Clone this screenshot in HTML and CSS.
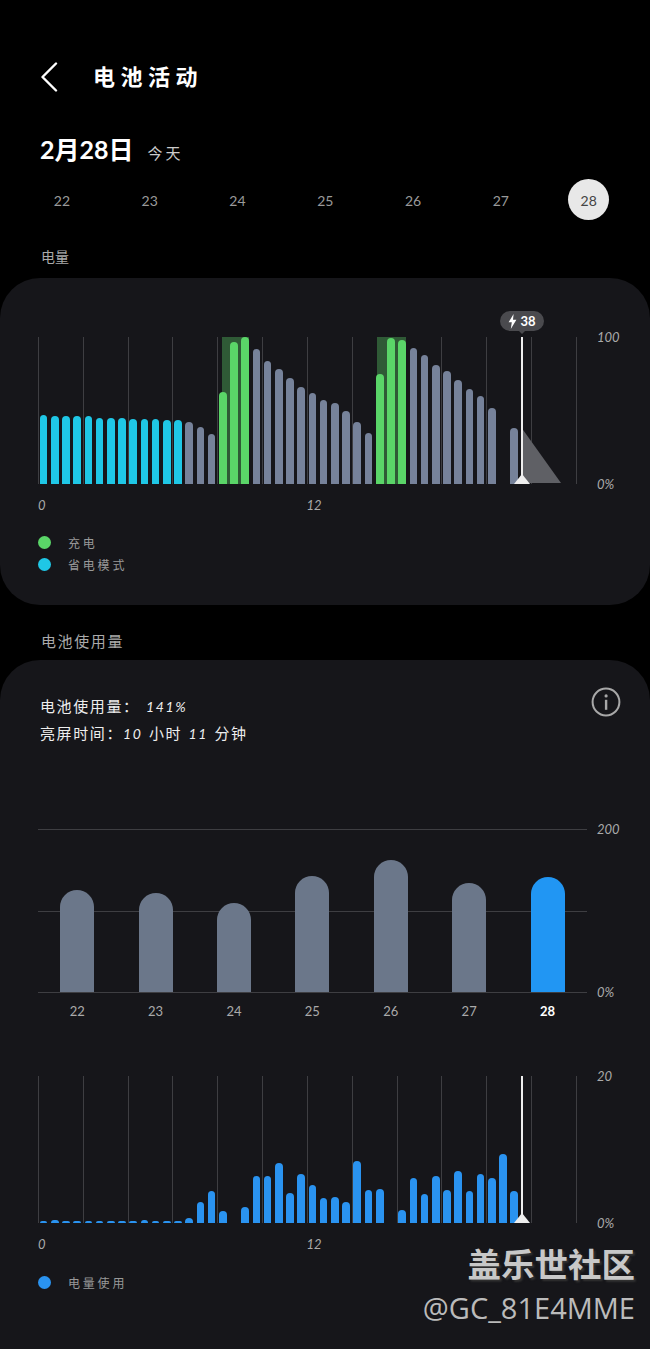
FILE: index.html
```html
<!DOCTYPE html>
<html>
<head>
    <title>电池活动</title>
    <link rel="stylesheet" href="styles.css">
</head>
<body>
    <div class="header">
        <svg class="back" width="18" height="30" viewBox="0 0 18 30"><path d="M16 1.5 L2.5 15 L16 28.5" fill="none" stroke="#fff" stroke-width="2.4" stroke-linecap="round" stroke-linejoin="round"/></svg>
        <h1>电池活动</h1>
    </div>

    <div class="date-row">
        <span class="date">2月28日</span>
        <span class="today">今天</span>
    </div>

    <div class="days">
        <span class="day">22</span>
        <span class="day">23</span>
        <span class="day">24</span>
        <span class="day">25</span>
        <span class="day">26</span>
        <span class="day">27</span>
        <span class="day active">28</span>
    </div>

    <h2 class="section-title first">电量</h2>

    <div class="card level-card">
        <div class="chart">
            <div class="plot">
                <div class="zone zone-a"></div>
                <div class="zone zone-b"></div>
                <div class="bars">
                    <i class="bar save" style="height:69px"></i><i class="bar save" style="height:68px"></i><i class="bar save" style="height:68px"></i><i class="bar save" style="height:68px"></i>
                    <i class="bar save" style="height:68px"></i><i class="bar save" style="height:66px"></i><i class="bar save" style="height:66px"></i><i class="bar save" style="height:66px"></i>
                    <i class="bar save" style="height:65px"></i><i class="bar save" style="height:65px"></i><i class="bar save" style="height:65px"></i><i class="bar save" style="height:64px"></i>
                    <i class="bar save" style="height:64px"></i><i class="bar" style="height:62px"></i><i class="bar" style="height:57px"></i><i class="bar" style="height:50px"></i>
                    <i class="bar charge" style="height:92px"></i><i class="bar charge" style="height:142px"></i><i class="bar charge" style="height:147px"></i><i class="bar" style="height:135px"></i>
                    <i class="bar" style="height:123px"></i><i class="bar" style="height:115px"></i><i class="bar" style="height:106px"></i><i class="bar" style="height:97px"></i>
                    <i class="bar" style="height:91px"></i><i class="bar" style="height:84px"></i><i class="bar" style="height:81px"></i><i class="bar" style="height:73px"></i>
                    <i class="bar" style="height:62px"></i><i class="bar" style="height:51px"></i><i class="bar charge" style="height:110px"></i><i class="bar charge" style="height:146px"></i>
                    <i class="bar charge" style="height:144px"></i><i class="bar" style="height:136px"></i><i class="bar" style="height:129px"></i><i class="bar" style="height:119px"></i>
                    <i class="bar" style="height:113px"></i><i class="bar" style="height:104px"></i><i class="bar" style="height:95px"></i><i class="bar" style="height:88px"></i>
                    <i class="bar" style="height:76px"></i><i></i><i class="bar" style="height:56px"></i>
                </div>
                <svg class="forecast" width="45" height="57" viewBox="0 0 45 57"><polygon points="4,0 44,56 4,56" fill="#5f6065"/></svg>
                <div class="now"></div>
                <svg class="now-tip" width="16" height="10" viewBox="0 0 16 10"><polygon points="8,0 16,10 0,10" fill="#eee"/></svg>
                <div class="badge">
                    <svg width="9" height="15" viewBox="0 0 9 15"><path d="M5.6 0 L0.6 8.2 L3.8 8.2 L2.8 15 L8.4 5.8 L5 5.8 Z" fill="#fff"/></svg>
                    <span>38</span>
                </div>
            </div>
            <div class="y-axis">
                <span>100</span>
                <span>0%</span>
            </div>
        </div>
        <div class="x-axis">
            <span>0</span>
            <span>12</span>
        </div>
        <div class="legend">
            <div class="legend-row"><span class="dot green"></span>充电</div>
            <div class="legend-row"><span class="dot teal"></span>省电模式</div>
        </div>
    </div>

    <h2 class="section-title">电池使用量</h2>

    <div class="card usage-card">
        <div class="summary">
            <div class="summary-text">
                <div>电池使用量： <em>141%</em></div>
                <div>亮屏时间：<em>10</em> 小时 <em>11</em> 分钟</div>
            </div>
            <svg class="info" width="30" height="30" viewBox="0 0 30 30">
                <circle cx="15" cy="15" r="13.4" fill="none" stroke="#a8a8a8" stroke-width="2"/>
                <rect x="13.9" y="12.8" width="2.4" height="10" fill="#a8a8a8"/>
                <circle cx="15.1" cy="8.9" r="1.6" fill="#a8a8a8"/>
            </svg>
        </div>

        <div class="chart week-chart">
            <div class="week-plot">
                <i class="week-bar" style="height:102px"></i>
                <i class="week-bar" style="height:99px"></i>
                <i class="week-bar" style="height:89px"></i>
                <i class="week-bar" style="height:116px"></i>
                <i class="week-bar" style="height:132px"></i>
                <i class="week-bar" style="height:109px"></i>
                <i class="week-bar today-bar" style="height:115px"></i>
            </div>
            <div class="y-axis">
                <span>200</span>
                <span>0%</span>
            </div>
        </div>
        <div class="week-labels">
            <span>22</span><span>23</span><span>24</span><span>25</span><span>26</span><span>27</span><span class="current">28</span>
        </div>

        <div class="chart hours-chart">
            <div class="plot">
                <div class="bars">
                    <i class="bar use" style="height:2px"></i><i class="bar use" style="height:3px"></i><i class="bar use" style="height:2px"></i><i class="bar use" style="height:2px"></i>
                    <i class="bar use" style="height:2px"></i><i class="bar use" style="height:2px"></i><i class="bar use" style="height:2px"></i><i class="bar use" style="height:2px"></i>
                    <i class="bar use" style="height:2px"></i><i class="bar use" style="height:3px"></i><i class="bar use" style="height:2px"></i><i class="bar use" style="height:2px"></i>
                    <i class="bar use" style="height:2px"></i><i class="bar use" style="height:5px"></i><i class="bar use" style="height:21px"></i><i class="bar use" style="height:32px"></i>
                    <i class="bar use" style="height:12px"></i><i></i><i class="bar use" style="height:16px"></i><i class="bar use" style="height:47px"></i>
                    <i class="bar use" style="height:47px"></i><i class="bar use" style="height:60px"></i><i class="bar use" style="height:30px"></i><i class="bar use" style="height:49px"></i>
                    <i class="bar use" style="height:38px"></i><i class="bar use" style="height:25px"></i><i class="bar use" style="height:26px"></i><i class="bar use" style="height:21px"></i>
                    <i class="bar use" style="height:62px"></i><i class="bar use" style="height:33px"></i><i class="bar use" style="height:34px"></i><i></i>
                    <i class="bar use" style="height:13px"></i><i class="bar use" style="height:45px"></i><i class="bar use" style="height:29px"></i><i class="bar use" style="height:47px"></i>
                    <i class="bar use" style="height:33px"></i><i class="bar use" style="height:52px"></i><i class="bar use" style="height:32px"></i><i class="bar use" style="height:49px"></i>
                    <i class="bar use" style="height:45px"></i><i class="bar use" style="height:69px"></i><i class="bar use" style="height:32px"></i>
                </div>
                <div class="now"></div>
                <svg class="now-tip" width="16" height="10" viewBox="0 0 16 10"><polygon points="8,0 16,10 0,10" fill="#eee"/></svg>
            </div>
            <div class="y-axis">
                <span>20</span>
                <span>0%</span>
            </div>
        </div>
        <div class="x-axis">
            <span>0</span>
            <span>12</span>
        </div>
        <div class="legend usage-legend">
            <div class="legend-row"><span class="dot blue"></span>电量使用</div>
        </div>

        <div class="watermark">
            <div class="wm-title">盖乐世社区</div>
            <div class="wm-id">@GC_81E4MME</div>
        </div>
    </div>
</body>
</html>
```

FILE: styles.css
```css
body {
    margin: 0;
    background-color: #000;
    color: #fff;
    font-family: Lato, "Noto Sans CJK SC", sans-serif;
    height: 1349px;
    overflow: hidden;
}

h1, h2 {
    margin: 0;
    font-weight: normal;
}

/* top of the page */
.header {
    display: flex;
    align-items: center;
    padding: 62px 0 0 40px;
    height: 30px;
}

.back {
    display: block;
}

.header h1 {
    margin-left: 35px;
    font-size: 22px;
    font-weight: bold;
    letter-spacing: 5.5px;
    line-height: 30px;
}

.date-row {
    display: flex;
    align-items: baseline;
    margin-top: 42px;
    padding-left: 40px;
    height: 30px;
}

.date {
    font-size: 25px;
    font-weight: bold;
    line-height: 30px;
}

.today {
    margin-left: 14px;
    font-size: 15px;
    letter-spacing: 3px;
    color: #ccc;
}

.days {
    display: grid;
    grid-template-columns: repeat(7, 87.8px);
    margin-top: 15px;
    padding-left: 18px;
    height: 41px;
}

.day {
    justify-self: center;
    width: 41px;
    line-height: 43px;
    text-align: center;
    font-size: 14px;
    color: #9a9a9a;
}

.day.active {
    background-color: #e8e8e8;
    border-radius: 50%;
    height: 41px;
    color: #444;
}

.section-title {
    margin: 26px 0 9px;
    padding-left: 41px;
    font-size: 15px;
    letter-spacing: 1.6px;
    line-height: 20px;
    color: #aaa;
}

.section-title.first {
    margin: 27px 0 11px;
    letter-spacing: 0;
    font-size: 14px;
}

/* cards */
.card {
    background-color: #16161a;
    box-sizing: border-box;
    padding-left: 38px;
    position: relative;
}

.level-card {
    height: 327px;
    padding-top: 59px;
    border-radius: 40px;
}

.usage-card {
    height: 689px;
    padding-top: 33px;
    border-radius: 40px 40px 0 0;
}

/* charts */
.chart {
    display: flex;
}

.plot {
    position: relative;
    width: 539px;
    height: 147px;
    background-image: repeating-linear-gradient(90deg, #3e3e42 0, #3e3e42 1px, transparent 1px, transparent 44.83px);
}

.bars {
    position: relative;
    display: grid;
    grid-template-columns: repeat(48, 11.208px);
    align-items: end;
    height: 147px;
}

.bar {
    display: block;
    margin: 0 1.8px;
    border-radius: 4px 4px 0 0;
    background-color: #76829a;
}

.bar.save {
    background-color: #1fc7e6;
}

.bar.charge {
    background-color: #5ad568;
}

.bar.use {
    background-color: #2a93f0;
}

.zone {
    position: absolute;
    top: 0;
    bottom: 0;
    background-color: #2f5a36;
}

.zone-a {
    left: 184px;
    width: 27px;
}

.zone-b {
    left: 339px;
    width: 29px;
}

.forecast {
    position: absolute;
    left: 479px;
    bottom: 0;
}

.now {
    position: absolute;
    left: 483px;
    top: 0;
    bottom: 0;
    width: 2px;
    background-color: #eee;
}

.now-tip {
    position: absolute;
    left: 476px;
    bottom: 0;
}

.badge {
    position: absolute;
    left: 462px;
    top: -26px;
    width: 44px;
    height: 20px;
    box-sizing: border-box;
    display: flex;
    align-items: center;
    justify-content: center;
    gap: 3px;
    border-radius: 10px;
    background-color: #4a4a4e;
    font-size: 13px;
    font-weight: bold;
}

.badge::after {
    content: "";
    position: absolute;
    left: 19px;
    top: 20px;
    border-left: 3px solid transparent;
    border-right: 3px solid transparent;
    border-top: 3px solid #4a4a4e;
}

.y-axis {
    display: flex;
    flex-direction: column;
    justify-content: space-between;
    margin: -8px 0 -8px 20px;
    font-size: 13px;
    font-style: italic;
    line-height: 16px;
    color: #aaa;
}

.x-axis {
    display: flex;
    margin-top: 13px;
    font-size: 13px;
    font-style: italic;
    line-height: 16px;
    color: #aaa;
}

.x-axis span:last-child {
    margin-left: 261px;
}

.legend {
    margin-top: 18px;
    font-size: 12px;
    letter-spacing: 2.8px;
    color: #999;
}

.usage-legend {
    margin-top: 19px;
}

.legend-row {
    display: flex;
    align-items: center;
    height: 22px;
}

.dot {
    width: 13px;
    height: 13px;
    margin-right: 17px;
    border-radius: 50%;
}

.dot.green { background-color: #5ad568; }
.dot.teal { background-color: #1fc7e6; }
.dot.blue { background-color: #2a93f0; }

/* battery usage card */
.summary {
    display: flex;
    justify-content: space-between;
    padding-right: 29px;
    height: 52px;
}

.summary-text {
    margin-left: 2px;
    font-size: 15px;
    line-height: 26px;
    letter-spacing: 1.6px;
    word-spacing: 1px;
    color: #eee;
}

.summary-text em {
    font-size: 14px;
}

.info {
    margin-top: -6px;
}

.week-chart {
    margin-top: 84px;
}

.week-plot {
    display: grid;
    grid-template-columns: repeat(7, 78.4px);
    align-items: end;
    justify-items: center;
    box-sizing: border-box;
    width: 549px;
    height: 164px;
    border-top: 1px solid #3e3e42;
    border-bottom: 1px solid #3e3e42;
    background-image: linear-gradient(#3e3e42, #3e3e42);
    background-size: 100% 1px;
    background-position: 0 81px;
    background-repeat: no-repeat;
}

.week-plot + .y-axis {
    margin: -8px 0 -7px 10px;
}

.week-bar {
    display: block;
    width: 34px;
    border-radius: 17px 17px 0 0;
    background-color: #6b778a;
}

.today-bar {
    background-color: #2196f3;
}

.week-labels {
    display: grid;
    grid-template-columns: repeat(7, 78.4px);
    justify-items: center;
    margin-top: 10px;
    font-size: 13px;
    line-height: 16px;
    color: #aaa;
}

.week-labels .current {
    color: #fff;
    font-weight: bold;
}

.hours-chart {
    margin-top: 57px;
}

.watermark {
    position: absolute;
    right: 15px;
    top: 585px;
    text-align: right;
    color: #c8c8c8;
}

.wm-title {
    font-size: 33.5px;
    font-weight: bold;
    line-height: 38px;
    text-shadow: 2px 2px 2px #333;
}

.wm-id {
    margin-top: 6px;
    font-family: "Open Sans", sans-serif;
    font-size: 29px;
    line-height: 38px;
    color: #bbb;
}
```
